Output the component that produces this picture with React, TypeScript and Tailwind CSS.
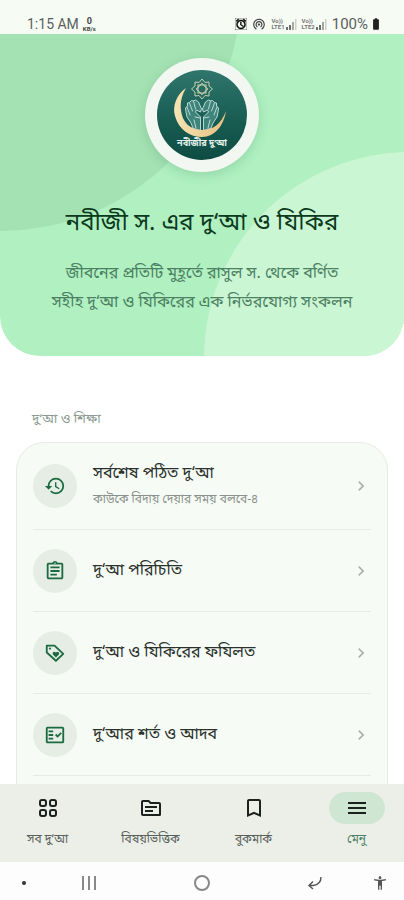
import React from 'react';
import type { IconType } from 'react-icons';
import {
  MdHistory,
  MdOutlineAssignment,
  MdOutlineFactCheck,
  MdOutlineTopic,
  MdBookmarkBorder,
  MdMenu,
  MdChevronRight,
  MdAlarm,
  MdWifiTethering,
  MdBatteryFull,
  MdAccessibilityNew,
} from 'react-icons/md';

type Icon = IconType | ((props: { className?: string }) => React.ReactElement);

const items: { icon: Icon; title: string; note?: string }[] = [
  { icon: MdHistory, title: 'সর্বশেষ পঠিত দু‘আ', note: 'কাউকে বিদায় দেয়ার সময় বলবে-৪' },
  { icon: MdOutlineAssignment, title: 'দু‘আ পরিচিতি' },
  { icon: TagHeartIcon, title: 'দু‘আ ও যিকিরের ফযিলত' },
  { icon: MdOutlineFactCheck, title: 'দু‘আর শর্ত ও আদব' },
];

const tabs: { icon: Icon; label: string; active?: boolean }[] = [
  { icon: GridIcon, label: 'সব দু‘আ' },
  { icon: MdOutlineTopic, label: 'বিষয়ভিত্তিক' },
  { icon: MdBookmarkBorder, label: 'বুকমার্ক' },
  { icon: MdMenu, label: 'মেনু', active: true },
];

export default function App() {
  return (
    <div className="h-screen flex flex-col overflow-hidden bg-white font-['Noto_Sans_Bengali','Noto_Sans',sans-serif]">
      <StatusBar />

      <main className="flex-1 min-h-0 overflow-hidden">
        <Hero />

        <section className="px-4 pt-[50px]">
          <h2 className="px-4 mb-2 text-[13px] leading-7 text-[#8b9a91]">দু‘আ ও শিক্ষা</h2>
          <ul className="rounded-[28px] border border-[#e6ece4] bg-[#f6fcf5]">
            {items.map((item) => (
              <MenuRow key={item.title} {...item} />
            ))}
            <li className="h-20" />
          </ul>
        </section>
      </main>

      <nav className="shrink-0 bg-[#ebefe8] pt-2 pb-[10px]">
        <div className="-mx-1 grid grid-cols-4">
          {tabs.map(({ icon: Icon, label, active }) => (
            <a key={label} href="#" className="flex flex-col items-center gap-1">
              <span className={`w-14 h-8 rounded-full flex items-center justify-center ${active ? 'bg-[#cfe7d2]' : ''}`}>
                <Icon className="w-6 h-6 text-[#1c211e]" />
              </span>
              <span className={`text-xs leading-6 ${active ? 'text-[#4b7f63]' : 'text-[#59605b]'}`}>{label}</span>
            </a>
          ))}
        </div>
      </nav>

      <SystemNav />
    </div>
  );
}

function StatusBar() {
  return (
    <header className="h-[34px] shrink-0 flex items-end justify-between bg-[#f6fbf4] pl-[27px] pr-6 font-[Roboto,sans-serif] text-[#5c605d]">
      <div className="flex items-center gap-1">
        <span className="text-sm leading-5">1:15 AM</span>
        <span className="flex flex-col items-center text-[#444]">
          <span className="text-[9px] leading-[9px] font-bold">0</span>
          <span className="text-[6px] leading-[6px] font-bold">KB/s</span>
        </span>
      </div>
      <div className="flex items-center gap-[5px]">
        <MdAlarm className="w-3 h-3 text-black stroke-black stroke-1" />
        <MdWifiTethering className="w-[14px] h-[14px] text-[#444]" />
        <Signal name="LTE1" />
        <Signal name="LTE2" />
        <span className="flex items-center text-[15px] leading-5">
          100%
          <MdBatteryFull className="-mr-1 w-4 h-[14px] text-[#222]" />
        </span>
      </div>
    </header>
  );
}

function Signal({ name }: { name: string }) {
  return (
    <span className="flex items-end">
      <span className="flex flex-col text-[6px] leading-[6px] font-bold text-[#777]">
        <span>Vo))</span>
        <span>{name}</span>
      </span>
      <svg viewBox="0 0 12 12" className="w-3 h-3" fill="#6d716e">
        <rect x="1" y="9" width="2" height="3" />
        <rect x="4" y="7" width="2" height="5" />
        <rect x="7" y="4" width="2" height="8" opacity="0.6" />
        <rect x="10" y="1" width="1.5" height="11" opacity="0.3" />
      </svg>
    </span>
  );
}

function Hero() {
  return (
    <div className="relative overflow-hidden rounded-b-[40px] bg-[#b0f0c1] px-8 pt-6 pb-[38px] text-center">
      <div className="absolute -left-[241px] -top-[285px] w-[482px] h-[482px] rounded-full bg-[#a4e2b3]" />
      <div className="absolute -right-[212px] -bottom-[208px] w-[412px] h-[412px] rounded-full bg-[#cbf6d4]" />

      <div className="relative flex flex-col items-center">
        <div className="w-[114px] h-[114px] rounded-full bg-[#f2f8f1] p-3 shadow-[0_3px_12px_rgba(40,110,70,0.2)]">
          <Logo />
        </div>
        <h1 className="mt-8 text-2xl leading-10 whitespace-nowrap text-[#0b3a1d]">নবীজী স. এর দু‘আ ও যিকির</h1>
        <p className="mt-4 text-base leading-[29px] text-[#4c8062]">
          <span className="block whitespace-nowrap">জীবনের প্রতিটি মুহূর্তে রাসুল স. থেকে বর্ণিত</span>
          <span className="block whitespace-nowrap">সহীহ দু‘আ ও যিকিরের এক নির্ভরযোগ্য সংকলন</span>
        </p>
      </div>
    </div>
  );
}

function Logo() {
  return (
    <svg viewBox="0 0 90 90" className="w-full h-full">
      <defs>
        <linearGradient id="disc" x1="0" y1="0" x2="0" y2="1">
          <stop offset="0" stopColor="#2f766d" />
          <stop offset="0.6" stopColor="#175b50" />
          <stop offset="1" stopColor="#0e4c42" />
        </linearGradient>
        <linearGradient id="moon" x1="0" y1="0" x2="1" y2="0">
          <stop offset="0" stopColor="#f6e3b4" />
          <stop offset="1" stopColor="#e6bf80" />
        </linearGradient>
      </defs>
      <circle cx="45" cy="45" r="45" fill="url(#disc)" />
      {/* eight-pointed star */}
      <g fill="none" stroke="#c9cfae" strokeWidth="1">
        <path d="M45 9l3 3.500 4-.5v4l3.500 3-3.500 3v4l-4-.5-3 3.500-3-3.500-4 .5v-4L34.500 19l3.500-3v-4l4 .5z" />
        <rect x="41" y="15" width="8" height="8" />
        <rect x="41" y="15" width="8" height="8" transform="rotate(45 45 19)" />
      </g>
      {/* open hands */}
      <g fill="#3f847b" stroke="#b9d8d5" strokeWidth="1" strokeLinejoin="round" strokeLinecap="round">
        <path d="M43.500 60V47l-5-5 1-2 4 2 1-3-3-7-3-2-2 1-2-.5-2 2-2 .5v3l-2 2 .5 4 1 5 4 6 2 5z" />
        <path d="M46.500 60V47l5-5-1-2-4 2-1-3 3-7 3-2 2 1 2-.5 2 2 2 .5v3l2 2-.5 4-1 5-4 6-2 5z" />
        <path d="M36.500 31l2 8M32.500 33l3 8M30 37l3 8M39 58l-2-8M43 48l-5-1" fill="none" />
        <path d="M53.500 31l-2 8M57.500 33l-3 8M60 37l-3 8M51 58l2-8M47 48l5-1" fill="none" />
      </g>
      <path d="M29 18C20 24 15 36 18 46c4 14 15 21 27 21 13 0 22-12 24-26-5 13-13 19-24 19-12 0-20-8-21-20-1-8 1-15 5-22z" fill="url(#moon)" />
      <text x="45" y="76" textAnchor="middle" fontSize="9" fontWeight="700" fill="#e4f1ec">
        নবীজীর দু‘আ
      </text>
    </svg>
  );
}

function MenuRow({ icon: Icon, title, note }: { icon: Icon; title: string; note?: string }) {
  return (
    <li className="px-4">
      <a href="#" className={`flex items-center border-b border-[#e7ede5] ${note ? 'h-[87px]' : 'h-[82px]'}`}>
        <span className="w-11 h-11 shrink-0 rounded-full bg-[#e5ede5] flex items-center justify-center">
          <Icon className="w-[22px] h-[22px] text-[#1c6b40]" />
        </span>
        <span className="ml-4 flex-1 min-w-0">
          <span className="block text-base leading-7 text-[#2b312d]">{title}</span>
          {note && <span className="block text-xs leading-6 text-[#8a918c]">{note}</span>}
        </span>
        <MdChevronRight className="w-5 h-5 text-[#a9b3ab]" />
      </a>
    </li>
  );
}

function TagHeartIcon({ className }: { className?: string }) {
  return (
    <svg viewBox="0 0 24 24" className={className} fill="currentColor">
      <path d="M3 4h8.500l9.500 9-8 7.500L3 11.500z" fill="none" stroke="currentColor" strokeWidth="2" strokeLinejoin="round" />
      <circle cx="6.500" cy="7.200" r="1.200" />
      <path d="M13 17l-3-3a1.900 1.900 0 0 1 2.700-2.700l.3.300.3-.3a1.900 1.900 0 0 1 2.700 2.700z" />
    </svg>
  );
}

function GridIcon({ className }: { className?: string }) {
  return (
    <svg viewBox="0 0 24 24" className={className} fill="none" stroke="currentColor" strokeWidth="2">
      <rect x="4" y="4" width="6" height="6" rx="2" />
      <rect x="14" y="4" width="6" height="6" rx="2" />
      <rect x="4" y="14" width="6" height="6" rx="2" />
      <rect x="14" y="14" width="6" height="6" rx="2" />
    </svg>
  );
}

function SystemNav() {
  return (
    <footer className="h-[38px] shrink-0 grid grid-cols-[8%_28%_28%_28%_8%] items-center bg-[#fdfdfd] pt-1 text-[#555]">
      <span className="w-4 flex justify-center justify-self-end">
        <span className="w-1 h-1 rounded-full bg-[#333]" />
      </span>
      <button aria-label="Recents" className="flex justify-center gap-1">
        <span className="w-[2px] h-[14px] bg-[#888]" />
        <span className="w-[2px] h-[14px] bg-[#888]" />
        <span className="w-[2px] h-[14px] bg-[#888]" />
      </button>
      <button aria-label="Home" className="justify-self-center w-4 h-4 rounded-full border-2 border-[#888]" />
      <button aria-label="Back" className="justify-self-center">
        <svg viewBox="0 0 16 16" className="w-4 h-4" fill="none" stroke="currentColor" strokeWidth="1.4">
          <path d="M14 2c0 5-3 8-8 8.500H2M6 6.500L2 10.500l4 3.500" />
        </svg>
      </button>
      <button aria-label="Accessibility" className="justify-self-start">
        <MdAccessibilityNew className="w-4 h-4" />
      </button>
    </footer>
  );
}
